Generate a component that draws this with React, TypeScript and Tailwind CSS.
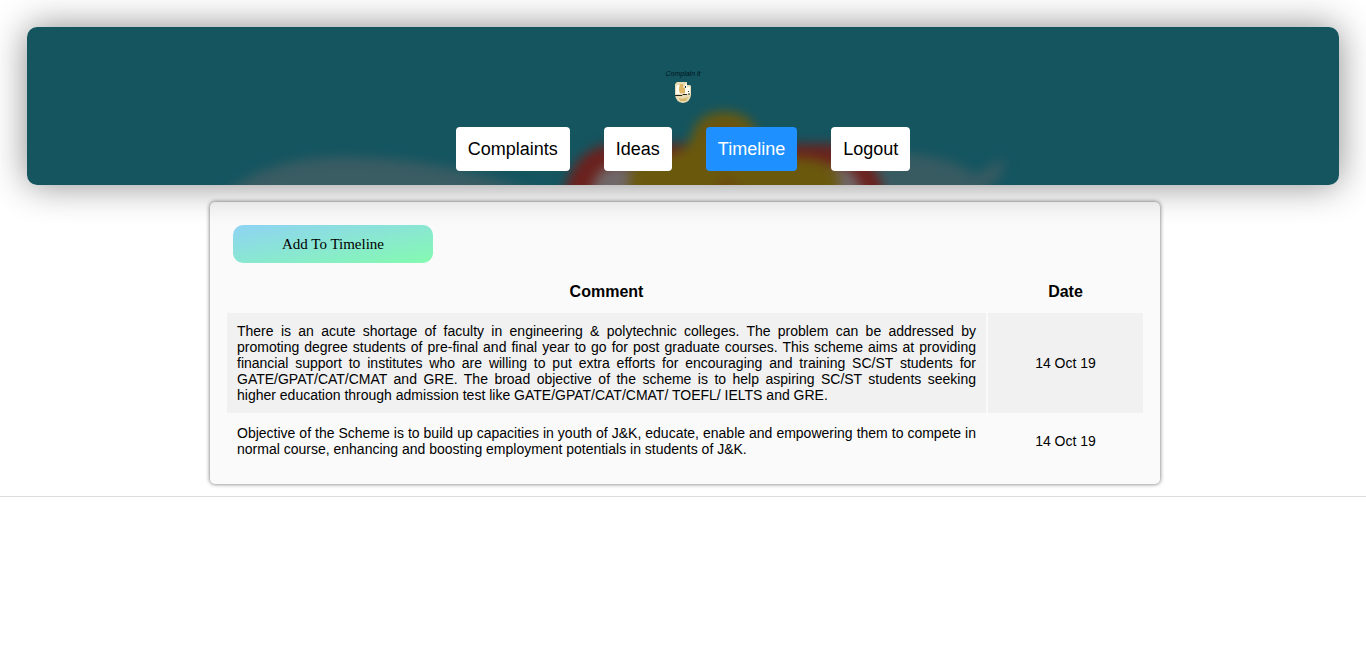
const navItems = [
  { label: "Complaints", active: false },
  { label: "Ideas", active: false },
  { label: "Timeline", active: true },
  { label: "Logout", active: false },
];

const entries = [
  {
    comment:
      "There is an acute shortage of faculty in engineering & polytechnic colleges. The problem can be addressed by promoting degree students of pre-final and final year to go for post graduate courses. This scheme aims at providing financial support to institutes who are willing to put extra efforts for encouraging and training SC/ST students for GATE/GPAT/CAT/CMAT and GRE. The broad objective of the scheme is to help aspiring SC/ST students seeking higher education through admission test like GATE/GPAT/CAT/CMAT/ TOEFL/ IELTS and GRE.",
    date: "14 Oct 19",
  },
  {
    comment:
      "Objective of the Scheme is to build up capacities in youth of J&K, educate, enable and empowering them to compete in normal course, enhancing and boosting employment potentials in students of J&K.",
    date: "14 Oct 19",
  },
];

function HeaderArtwork() {
  return (
    <svg
      className="absolute inset-0 h-full w-full rounded-[10px]"
      viewBox="0 0 1312 158"
      preserveAspectRatio="xMidYMax slice"
      aria-hidden="true"
    >
      <defs>
        <filter id="soft" x="-20%" y="-40%" width="140%" height="180%" colorInterpolationFilters="sRGB">
          <feGaussianBlur stdDeviation="6" />
        </filter>
      </defs>
      <rect width="1312" height="158" fill="#145560" />
      <g filter="url(#soft)">
        <path d="M190 175 C225 138 275 129 325 130 C400 132 460 146 535 175 Z" fill="#3a5c63" />
        <path d="M830 175 V130 C870 122 925 128 948 148 L978 131 L975 148 L945 175 Z" fill="#385b62" />
        <path d="M536 195 V168 Q548 117 590 117 H805 Q848 120 858 170 V195 Z" fill="#6b211d" />
        <path d="M560 195 Q562 144 584 138 H812 Q836 142 840 195 Z" fill="#706768" />
        <path
          d="M602 195 V152 Q604 134 620 132 Q660 129 666 107 Q670 86 697 85 Q724 85 730 107 Q738 130 778 131 Q808 134 812 150 V195 Z"
          fill="#6a590d"
        />
        <path d="M676 104 Q697 94 716 104 V112 H676 Z" fill="#704c0e" />
        <path d="M670 190 L697 146 L750 190 Z" fill="#6b4a0d" />
      </g>
    </svg>
  );
}

function Logo() {
  return (
    <a href="#" aria-label="Complain it" className="flex flex-col items-center">
      <span className="font-['Liberation_Sans',Arial,sans-serif] text-[7px] leading-[11px] text-[#02161c] italic">
        Complain it
      </span>
      <svg className="mt-0.5 h-[22px] w-4" viewBox="0 0 16 22" aria-hidden="true">
        <path d="M2 1 H12 V4 H15 L16 5 V14 Q15 21.5 8 22 Q1 21.5 0 14 V3 Z" fill="#e9dcb4" />
        <path d="M2 4 H5 V13 H1 V7 Z M10 3 H12 V6 H15 V13 H10 Z" fill="#fffdf0" />
        <path d="M5 3 H8 V7 H10 V12 H5 L4 10 V7 Z" fill="#deb665" />
        <path d="M4 17 Q8 19 13 16 L11 20 H5 Z" fill="#d8b96c" />
        <path d="M0 14.5 H7 L8 13.5 H12" fill="none" stroke="#292820" strokeWidth="1" />
        <path d="M10.5 5 V7 M13 10.5 H14 M13 13 H15" stroke="#263d3d" strokeWidth="1" />
      </svg>
    </a>
  );
}

export default function App() {
  return (
    <div className="font-['Liberation_Sans',Arial,sans-serif] text-black">
      <div className="border-b border-[#dcdcdc] px-[27px] pt-[27px] pb-3">
        <header className="relative z-10 rounded-[10px] shadow-[0_0_36px_rgba(0,0,0,0.46)]">
          <HeaderArtwork />
          <div className="relative flex flex-col items-center pt-[41px] pb-[14px]">
            <Logo />
            <nav className="mt-6 flex flex-wrap justify-center gap-[34px]">
              {navItems.map((item) => (
                <a
                  key={item.label}
                  href="#"
                  aria-current={item.active ? "page" : undefined}
                  className={
                    item.active
                      ? "rounded bg-[#1e90ff] p-3 text-lg leading-5 text-white"
                      : "rounded bg-white p-3 text-lg leading-5 text-black"
                  }
                >
                  {item.label}
                </a>
              ))}
            </nav>
          </div>
        </header>

        <div className="mt-[17px] pl-1">
          <main className="mx-auto max-w-[950px] rounded-[5px] bg-[#fafafa] px-[15px] pt-[23px] pb-[15px] shadow-[0_0_4px_rgba(0,0,0,0.6)]">
            <button
              type="button"
              className="ml-2 h-[38px] w-[200px] rounded-[10px] bg-[linear-gradient(to_bottom_right,#8fd3f4,#84fab0)] font-['Liberation_Serif',serif] text-[15px]"
            >
              Add To Timeline
            </button>
            <table className="mt-2 w-full border-separate border-spacing-[2px]">
              <thead>
                <tr>
                  <th className="px-2.5 pt-[9px] pb-[9px] text-base leading-5">Comment</th>
                  <th className="w-[155px] px-2.5 pt-[9px] pb-[9px] text-base leading-5">Date</th>
                </tr>
              </thead>
              <tbody className="text-sm leading-4">
                {entries.map((entry) => (
                  <tr key={entry.comment} className="[&:nth-child(odd)>td]:bg-[#f1f1f1]">
                    <td className="p-2.5 text-justify">{entry.comment}</td>
                    <td className="p-2.5 text-center">{entry.date}</td>
                  </tr>
                ))}
              </tbody>
            </table>
          </main>
        </div>
      </div>
    </div>
  );
}
